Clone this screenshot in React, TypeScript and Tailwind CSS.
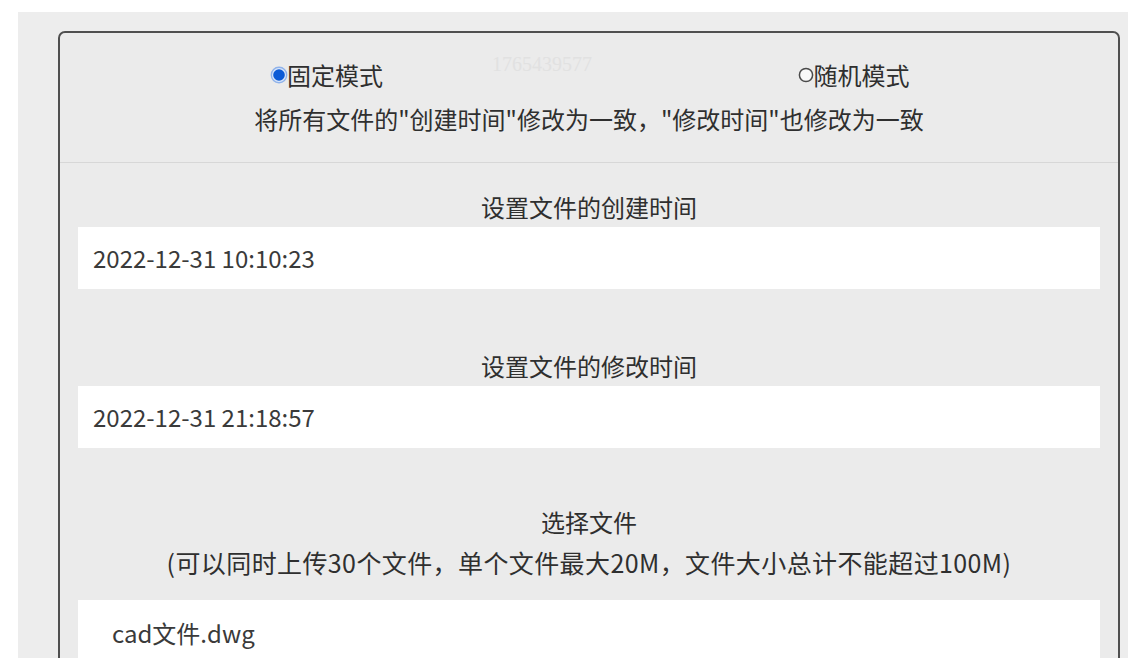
import { useState } from "react";

const CJK = "font-['Noto_Sans_CJK_SC',_'Noto_Sans',_sans-serif]";

function Radio({ checked, label, onClick }: { checked: boolean; label: string; onClick: () => void }) {
  return (
    <button type="button" onClick={onClick} className="flex items-center">
      {checked ? (
        <svg width="18" height="18" viewBox="0 0 18 18" className="shrink-0 -mr-px">
          <circle cx="9" cy="9" r="8.4" fill="#8fb2ea" />
          <circle cx="9" cy="9" r="7" fill="#dce8fa" />
          <circle cx="9" cy="9" r="5.8" fill="#0b5ad6" />
        </svg>
      ) : (
        <svg width="16" height="16" viewBox="0 0 16 16" className="shrink-0">
          <circle cx="8" cy="8" r="6.6" fill="#f9f9f9" stroke="#4a4a4a" strokeWidth="1.5" />
        </svg>
      )}
      <span className="text-[24px] leading-[32px] text-[#2f2f2f]">{label}</span>
    </button>
  );
}

function Field({ label, value, top }: { label: string; value: string; top: string }) {
  return (
    <div className={top}>
      <div className="text-center text-[24px] leading-[32px] text-[#2f2f2f]">{label}</div>
      <div className="mt-[4px] h-[62px] bg-white flex items-center pl-[15px] text-[24px] text-[#3a3a3a]">
        {value}
      </div>
    </div>
  );
}

export default function App() {
  const [mode, setMode] = useState<"fixed" | "random">("fixed");

  return (
    <div className={`h-[658px] bg-white overflow-hidden ${CJK}`}>
      <div className="mt-[12px] ml-[18px] h-[646px] bg-[#ededed] pt-[19px] pl-[40px] pr-[8px] overflow-hidden">
        <div className="relative h-[700px] rounded-[7px] border-2 border-[#4f4f4f] bg-[#ebebeb]">
          <div className="absolute left-[432px] top-[16px] text-[20px] text-[#e1e1e1] font-['Liberation_Serif',_serif] select-none">
            1765439577
          </div>

          <div className="border-b border-[#d7d7d7] pt-[26px] pb-[27px]">
            <div className="grid grid-cols-2">
              <div className="flex justify-center pl-[4px]">
                <Radio checked={mode === "fixed"} label="固定模式" onClick={() => setMode("fixed")} />
              </div>
              <div className="flex justify-center">
                <Radio checked={mode === "random"} label="随机模式" onClick={() => setMode("random")} />
              </div>
            </div>
            <p className="mt-[12px] text-center text-[24px] leading-[32px] text-[#2f2f2f]">
              将所有文件的"创建时间"修改为一致，"修改时间"也修改为一致
            </p>
          </div>

          <div className="px-[18px]">
            <Field top="pt-[28px]" label="设置文件的创建时间" value="2022-12-31 10:10:23" />
            <Field top="pt-[61px]" label="设置文件的修改时间" value="2022-12-31 21:18:57" />

            <div className="pt-[54px] text-center text-[24px] leading-[40px] text-[#2f2f2f]">
              <div>选择文件</div>
              <div className="text-[25px] tracking-[0.4px]">
                (可以同时上传30个文件，单个文件最大20M，文件大小总计不能超过100M)
              </div>
            </div>

            <div className="mt-[18px] h-[80px] bg-white pt-[17px] pl-[34px] text-[24px] leading-[32px] text-[#3a3a3a]">
              cad文件.dwg
            </div>
          </div>
        </div>
      </div>
    </div>
  );
}
